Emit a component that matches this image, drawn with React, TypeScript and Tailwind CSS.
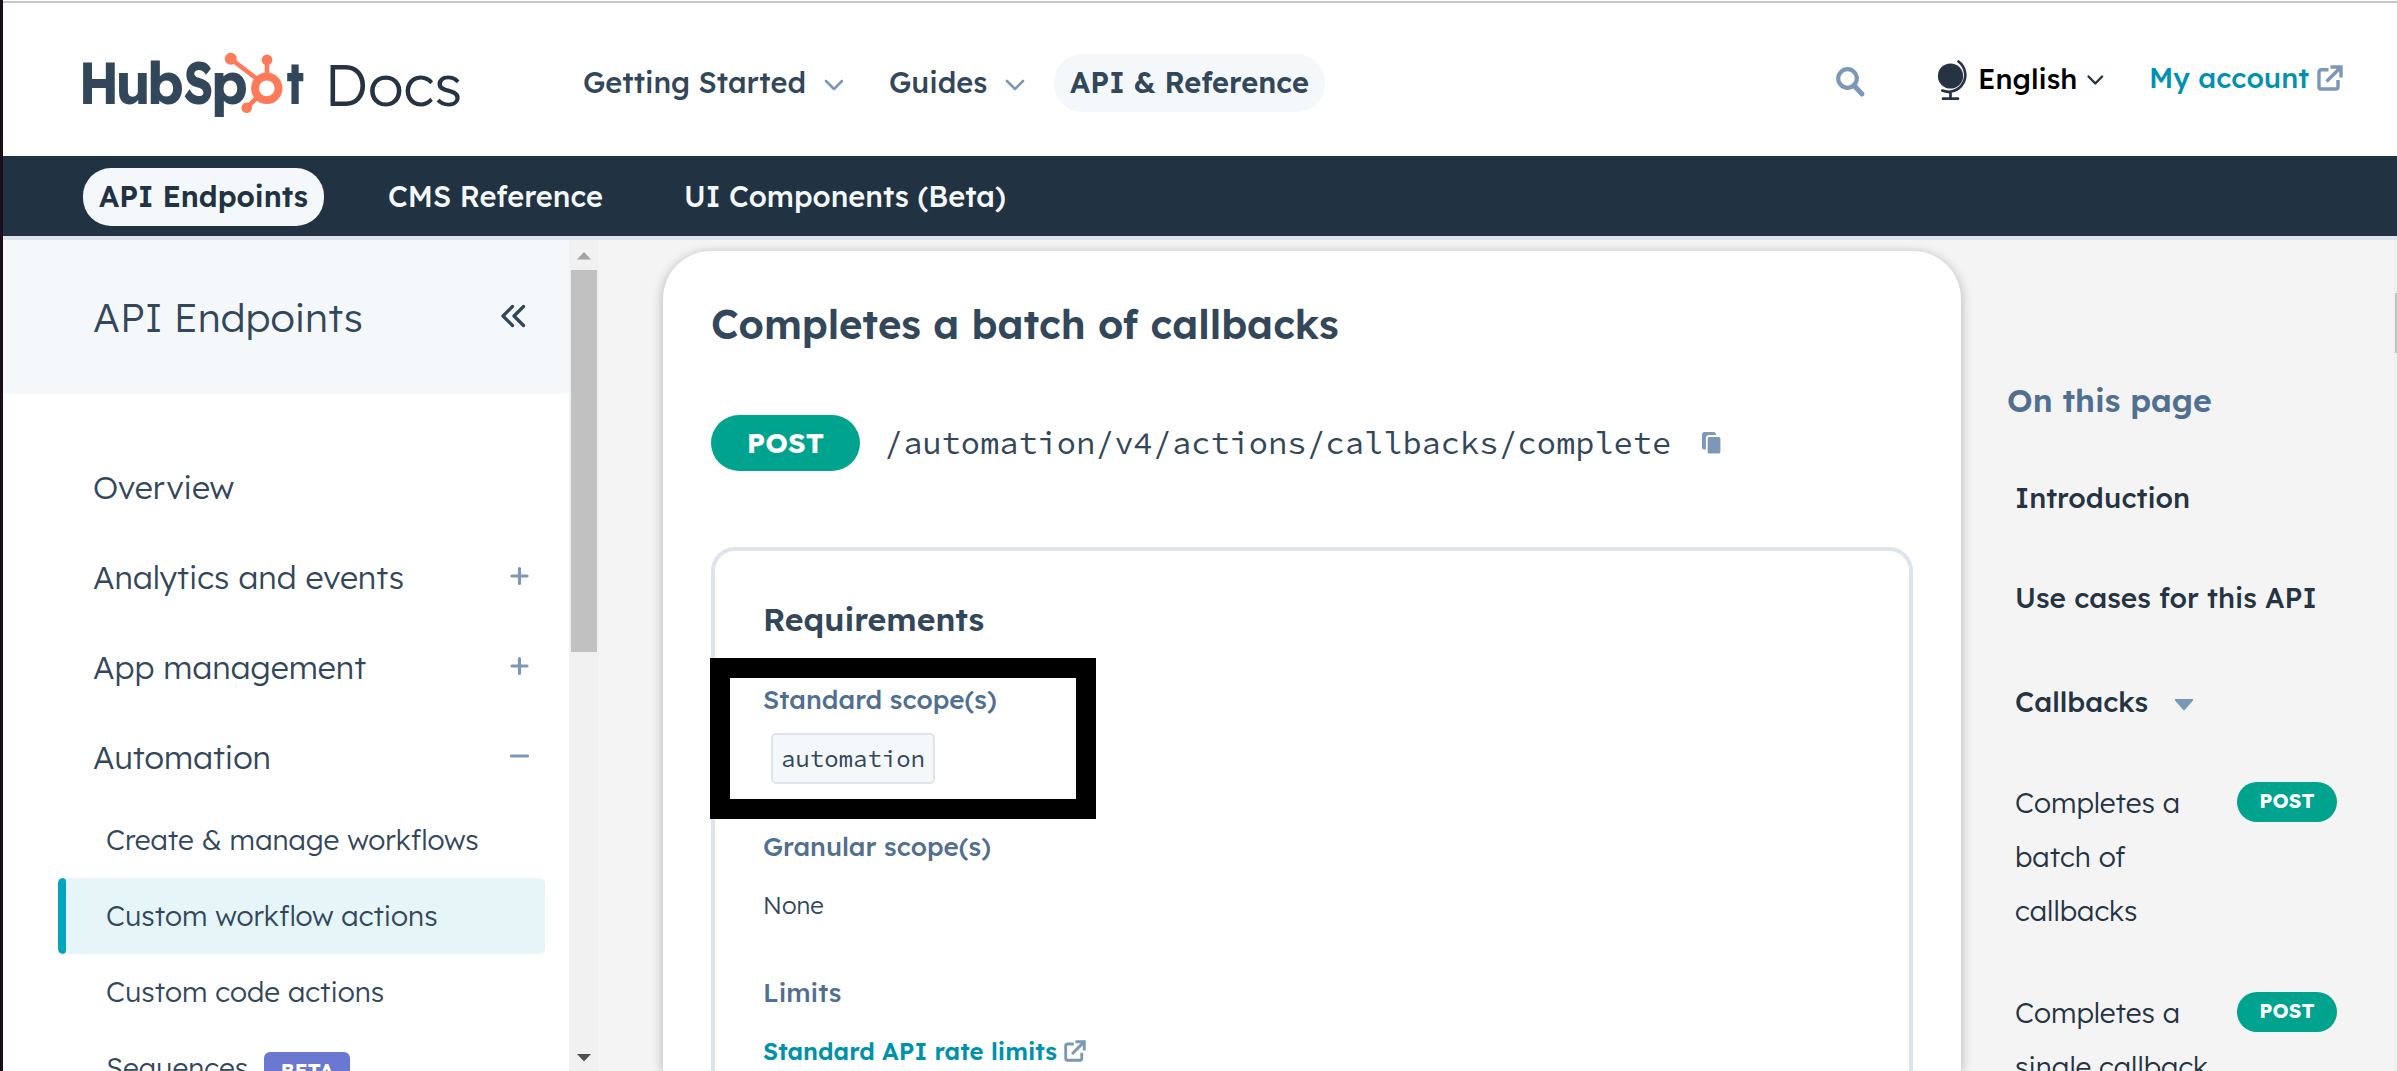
import React from "react";

type IconProps = { className?: string };

const wordmark = [
  { ch: "H", place: "translate(78.6 104) scale(0.88 1)" },
  { ch: "u", place: "translate(115.6 104) scale(0.92 1)" },
  { ch: "b", place: "translate(146.7 104) scale(0.95 1)" },
  { ch: "S", place: "translate(183.7 104) scale(0.78 1)" },
  { ch: "p", place: "translate(210.7 104) scale(0.95 1)" },
  { ch: "t", place: "translate(286.3 104) scale(0.76 1)" },
];

const Logo = () => (
  <svg className="mt-[37px] h-[90px] w-[390px] shrink-0" viewBox="80 40 390 90" fontFamily="'Lexend Deca', Lexend, Inter, sans-serif">
    {wordmark.map((l) => (
      <text key={l.ch} transform={l.place} fontSize="59.500" fontWeight="660" fill="#33475b">{l.ch}</text>
    ))}
    <g stroke="#ff7a59" fill="none" strokeWidth="4.6">
      <path d="M231 59 257 79M267 60V76M247 107.500 257 97.500" />
      <circle cx="266.800" cy="88.300" r="11.800" strokeWidth="7.800" />
    </g>
    <g fill="#ff7a59">
      <circle cx="230.800" cy="58.700" r="6" />
      <circle cx="267" cy="60" r="5.400" />
      <circle cx="246.700" cy="107.700" r="5.300" />
    </g>
    <text x="324.500" y="106" fontSize="58.500" fontWeight="300" fill="#253342">Docs</text>
  </svg>
);

const NavChevron = () => (
  <svg className="mt-1 h-3 w-5 shrink-0" viewBox="0 0 20 12" fill="none" stroke="#7c98b6" strokeWidth="2.6" strokeLinecap="round" strokeLinejoin="round">
    <path d="M2 2l8 8 8-8" />
  </svg>
);

const ExternalIcon = ({ className = "" }: IconProps) => (
  <svg className={className} viewBox="0 0 26 26" fill="none" stroke="#7c98b6" strokeWidth="3.4" strokeLinejoin="round">
    <path d="M11.500 4.800H4a2 2 0 0 0-2 2V22a2 2 0 0 0 2 2h15a2 2 0 0 0 2-2v-7" />
    <path d="M13.500 2H24v10.500M23.500 2.500 9.500 16.500" strokeLinejoin="miter" />
    <path d="M18 2h6v6z" fill="#7c98b6" stroke="none" />
  </svg>
);

const Header = () => (
  <header className="flex h-[153px] shrink-0 items-start bg-white pl-[77px] text-[28px] leading-[28px] font-medium text-[#33475b]">
    <Logo />
    <nav className="mt-[51px] ml-[113px] flex h-[58px] items-center text-[29px]">
      <span className="w-[241px] pb-0.5 whitespace-nowrap">Getting Started</span>
      <NavChevron />
      <span className="ml-[45px] w-[116px] pb-0.5">Guides</span>
      <NavChevron />
      <span className="ml-[29px] flex h-[58px] w-[271px] items-center justify-center rounded-[28px] bg-[#f5f8fa] pb-0.5 font-semibold">API &amp; Reference</span>
    </nav>
    <svg className="mt-[63px] ml-[511px] h-8 w-[30px]" viewBox="0 0 30 32" fill="none" stroke="#7c98b6">
      <circle cx="11.500" cy="12.500" r="9.300" strokeWidth="4.200" />
      <path d="m18 19.500 8 8.500" strokeWidth="5" strokeLinecap="round" />
    </svg>
    <svg className="mt-[54px] ml-[71px] h-[46px] w-8" viewBox="1937 57 32 46" fill="none" stroke="#253342" strokeWidth="2.700" strokeLinecap="round">
      <circle cx="1950.500" cy="76" r="12.600" fill="#253342" stroke="none" />
      <path d="M1958.500 61.500A16.800 16.800 0 0 1 1942.300 90.600M1950.500 93.500V98.500M1943 98.700h15" />
    </svg>
    <span className="mt-[62px] ml-[9px] w-[108px] text-black">English</span>
    <svg className="mt-[71px] h-3 w-[18px]" viewBox="0 0 18 12" fill="none" stroke="#253342" strokeWidth="2.400" strokeLinecap="round" strokeLinejoin="round">
      <path d="m2.500 2.500 6.800 7 6.800-7" />
    </svg>
    <span className="mt-[61px] ml-[45px] w-[168px] whitespace-nowrap text-[#0091ae]">My account</span>
    <ExternalIcon className="mt-[62px] h-[26px] w-[26px]" />
  </header>
);

const SubNav = () => (
  <nav className="flex h-[84px] shrink-0 items-start border-b-4 border-[#dfe3eb] bg-[#213343] pt-3 pl-20 text-[29px] leading-[56px] font-medium text-[#f5f8fa]">
    <span className="w-[241px] rounded-[28px] bg-[#f5f8fa] pb-0.5 text-center font-semibold text-[#213343]">API Endpoints</span>
    <span className="ml-[64px] w-[296px]">CMS Reference</span>
    <span>UI Components (Beta)</span>
  </nav>
);

const sections = [
  { name: "Overview", sign: "" },
  { name: "Analytics and events", sign: "M2 10h15M9.500 2.500v15" },
  { name: "App management", sign: "M2 10h15M9.500 2.500v15" },
  { name: "Automation", sign: "M1.500 10h16" },
];

const Sidebar = () => (
  <aside className="w-[566px] shrink-0 overflow-hidden bg-white font-light text-[#33475b]">
    <div className="flex h-[154px] items-center justify-between bg-[#f5f8fa] pr-[42px] pl-[90px] text-[40px]">
      <span>API Endpoints</span>
      <svg className="mb-[3px] h-6 w-7" viewBox="0 0 28 24" fill="none" stroke="#33475b" strokeWidth="3.300" strokeLinecap="round" strokeLinejoin="round">
        <path d="M13.500 2.500 4 12l9.500 9.500M24.500 2.500 15 12l9.500 9.500" />
      </svg>
    </div>
    <ul className="pt-12 text-[32px] leading-[90px]">
      {sections.map((s) => (
        <li key={s.name} className="flex h-[90px] items-center justify-between pr-10 pl-[90px]">
          <span>{s.name}</span>
          {s.sign && (
            <svg className="mb-[3px] h-5 w-[19px]" viewBox="0 0 19 20" stroke="#7c98b6" strokeWidth="3.200" strokeLinecap="round">
              <path d={s.sign} />
            </svg>
          )}
        </li>
      ))}
    </ul>
    <ul className="pl-[55px] text-[28px] leading-[76px]">
      <li className="pl-12">Create &amp; manage workflows</li>
      <li className="relative w-[487px] overflow-hidden rounded-[5px] bg-[#e5f5f8] pl-12">
        <span className="absolute inset-y-0 left-0 w-2 rounded bg-[#00a4bd]" />
        Custom workflow actions
      </li>
      <li className="pl-12">Custom code actions</li>
      <li className="flex items-start pl-12">
        <span>Sequences</span>
        <span className="mt-[22px] ml-4 h-10 w-[86px] rounded-[6px] bg-[#6a78d1] text-center text-[20px] leading-[38px] font-bold text-white">BETA</span>
      </li>
    </ul>
  </aside>
);

const SidebarScroll = () => (
  <div className="flex w-[30px] shrink-0 flex-col items-center bg-[#f1f1f1]">
    <svg className="mt-3 h-2 w-[14px]" viewBox="0 0 14 8" fill="#a3a3a3"><path d="M7 0l7 7.500H0z" /></svg>
    <div className="mt-[10px] h-[382px] w-[26px] bg-[#c1c1c1]" />
    <svg className="mt-[402px] h-2 w-[14px]" viewBox="0 0 14 8" fill="#505050"><path d="M7 7.500l7-7.500H0z" /></svg>
  </div>
);

const Requirements = () => (
  <section className="relative mt-[76px] h-[700px] w-[1202px] rounded-[24px] border-4 border-[#dfe3eb] pt-[52px] pl-12 text-[26px] leading-[26px] font-medium text-[#516f90]">
    <h2 className="text-[32px] leading-8 font-semibold text-[#33475b]">Requirements</h2>
    <h3 className="mt-[52px]">Standard scope(s)</h3>
    <code className="mt-5 ml-2 block h-[51px] w-[164px] rounded-[5px] border-2 border-[#dfe3eb] bg-[#f5f8fa] px-2 text-[24px] leading-[47px] font-normal text-[#33475b] font-['Source_Code_Pro','Liberation_Mono',monospace]">automation</code>
    <h3 className="mt-[50px]">Granular scope(s)</h3>
    <p className="mt-[33px] text-[24px] leading-6 font-light text-[#33475b]">None</p>
    <h3 className="mt-[63px]">Limits</h3>
    <div className="mt-[33px] flex items-center gap-[7px] text-[24px] leading-6 font-semibold text-[#0091ae]">
      <span>Standard API rate limits</span>
      <ExternalIcon className="h-[22px] w-[22px]" />
    </div>
    <div className="absolute top-[107px] left-[-5px] h-[161px] w-[386px] border-20 border-black" />
  </section>
);

const Card = () => (
  <main className="mt-[11px] ml-16 w-[1298px] shrink-0 rounded-t-[48px] bg-white pt-[53px] pl-12 shadow-[0_2px_12px_rgba(0,0,0,0.28)]">
    <h1 className="text-[40px] leading-10 font-semibold text-[#33475b]">Completes a batch of callbacks</h1>
    <div className="mt-[71px] flex h-14 items-center">
      <span className="flex h-14 w-[149px] items-center justify-center rounded-full bg-[#00a38d] text-[28px] leading-7 font-bold text-white">POST</span>
      <code className="ml-6 pb-px text-[32px] leading-8 text-[#33475b] font-['Source_Code_Pro','Liberation_Mono',monospace]">/automation/v4/actions/callbacks/complete</code>
      <svg className="ml-[30px] h-6 w-[22px]" viewBox="0 0 22 24" fill="#7c98b6">
        <rect x="1" y="1" width="14" height="17.500" rx="2.500" />
        <rect x="5.800" y="5" width="14.500" height="18.500" rx="2.500" stroke="#fff" strokeWidth="1.800" />
      </svg>
    </div>
    <Requirements />
  </main>
);

const endpoints = ["Completes a batch of callbacks", "Completes a single callback"];

const Toc = () => (
  <aside className="ml-[46px] flex-1 pt-36 text-[28px] leading-7 font-medium text-[#253342]">
    <h2 className="text-[32px] leading-8 font-semibold text-[#516f90]">On this page</h2>
    <div className="pl-2">
      <p className="mt-[68px]">Introduction</p>
      <p className="mt-[72px]">Use cases for this API</p>
      <p className="mt-[76px] flex items-center">
        Callbacks
        <svg className="mt-1.5 ml-[26px] h-3 w-5" viewBox="0 0 20 12" fill="#7c98b6"><path d="M1.500 0h17q1.500 0 .5 1.500L11 10.800q-1 1-2 0L1 1.500Q0 0 1.500 0z" /></svg>
      </p>
      {endpoints.map((e, i) => (
        <div key={e} className={i === 0 ? "mt-[60px] flex items-start" : "mt-[48px] flex items-start"}>
          <span className="w-[200px] leading-[54px] font-light">{e}</span>
          <span className="mt-1.5 ml-[22px] h-10 w-[100px] rounded-full bg-[#00a38d] text-center text-[20px] leading-[37px] font-bold text-white">POST</span>
        </div>
      ))}
    </div>
  </aside>
);

export default function App() {
  return (
    <div className="flex h-[1071px] w-[2397px] overflow-hidden bg-white font-['Lexend_Deca',Lexend,Inter,sans-serif]">
      <div className="w-[3px] shrink-0 bg-[#1a0e1a]" />
      <div className="flex min-w-0 flex-1 flex-col">
        <div className="mt-px h-0.5 shrink-0 bg-[#c6c8c6]" />
        <Header />
        <SubNav />
        <div className="flex h-[831px] overflow-hidden bg-[#f4f4f4]">
          <Sidebar />
          <SidebarScroll />
          <Card />
          <Toc />
          <div className="w-1 shrink-0 bg-[#f1f1f1] pt-[53px]">
            <div className="ml-auto h-[60px] w-0.5 bg-[#c1c1c1]" />
          </div>
        </div>
      </div>
    </div>
  );
}
